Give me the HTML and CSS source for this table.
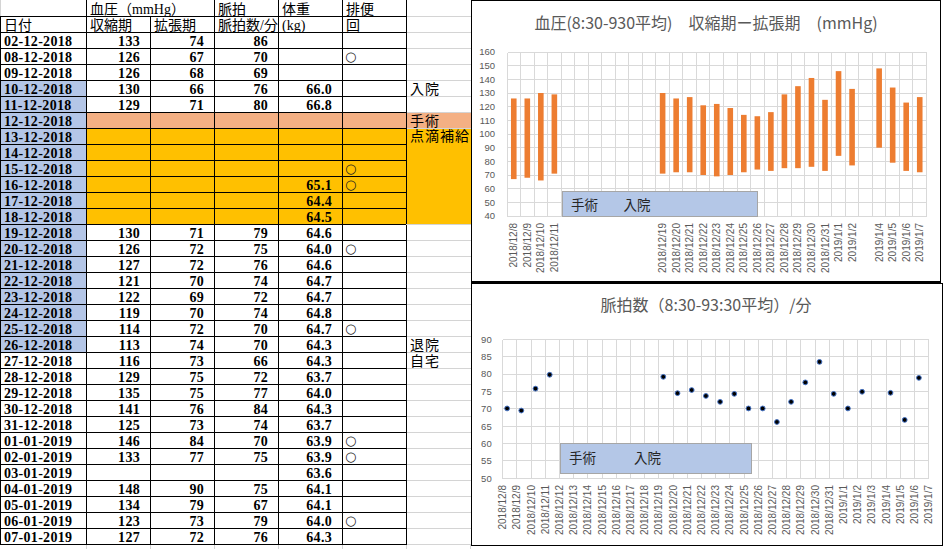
FILE: index.html
```html
<!DOCTYPE html>
<html lang="ja">
<head>
<meta charset="utf-8">
<title>血圧・脈拍・体重 記録</title>
<link rel="stylesheet" href="styles.css">
</head>
<body>
<div class="sheet">
  <table class="log">
    <colgroup>
      <col class="col-date"><col class="col-val"><col class="col-val"><col class="col-val"><col class="col-val"><col class="col-val"><col class="col-note">
    </colgroup>
    <thead>
      <tr><td class="h corner"></td><td class="h" colspan="2">血圧（mmHg）</td><td class="h">脈拍</td><td class="h">体重</td><td class="h">排便</td><td class="note"></td></tr>
      <tr><td class="h">日付</td><td class="h">収縮期</td><td class="h">拡張期</td><td class="h">脈拍数/分</td><td class="h">(kg)</td><td class="h">回</td><td class="note"></td></tr>
    </thead>
    <tbody>
      <tr><td class="d">02-12-2018</td><td class="n">133</td><td class="n">74</td><td class="n">86</td><td class="n"></td><td class="m"></td><td class="note"></td></tr>
      <tr><td class="d">08-12-2018</td><td class="n">126</td><td class="n">67</td><td class="n">70</td><td class="n"></td><td class="m">○</td><td class="note"></td></tr>
      <tr><td class="d">09-12-2018</td><td class="n">126</td><td class="n">68</td><td class="n">69</td><td class="n"></td><td class="m"></td><td class="note"></td></tr>
      <tr><td class="d stay">10-12-2018</td><td class="n">130</td><td class="n">66</td><td class="n">76</td><td class="n">66.0</td><td class="m"></td><td class="note">入院</td></tr>
      <tr><td class="d stay">11-12-2018</td><td class="n">129</td><td class="n">71</td><td class="n">80</td><td class="n">66.8</td><td class="m"></td><td class="note"></td></tr>
      <tr><td class="d stay">12-12-2018</td><td class="n op"></td><td class="n op"></td><td class="n op"></td><td class="n op"></td><td class="m op"></td><td class="note op">手術</td></tr>
      <tr><td class="d stay">13-12-2018</td><td class="n drip"></td><td class="n drip"></td><td class="n drip"></td><td class="n drip"></td><td class="m drip"></td><td class="note drip" rowspan="6">点滴補給</td></tr>
      <tr><td class="d stay">14-12-2018</td><td class="n drip"></td><td class="n drip"></td><td class="n drip"></td><td class="n drip"></td><td class="m drip"></td></tr>
      <tr><td class="d stay">15-12-2018</td><td class="n drip"></td><td class="n drip"></td><td class="n drip"></td><td class="n drip"></td><td class="m drip">○</td></tr>
      <tr><td class="d stay">16-12-2018</td><td class="n drip"></td><td class="n drip"></td><td class="n drip"></td><td class="n drip">65.1</td><td class="m drip">○</td></tr>
      <tr><td class="d stay">17-12-2018</td><td class="n drip"></td><td class="n drip"></td><td class="n drip"></td><td class="n drip">64.4</td><td class="m drip"></td></tr>
      <tr><td class="d stay">18-12-2018</td><td class="n drip"></td><td class="n drip"></td><td class="n drip"></td><td class="n drip">64.5</td><td class="m drip"></td></tr>
      <tr><td class="d stay">19-12-2018</td><td class="n">130</td><td class="n">71</td><td class="n">79</td><td class="n">64.6</td><td class="m"></td><td class="note"></td></tr>
      <tr><td class="d stay">20-12-2018</td><td class="n">126</td><td class="n">72</td><td class="n">75</td><td class="n">64.0</td><td class="m">○</td><td class="note"></td></tr>
      <tr><td class="d stay">21-12-2018</td><td class="n">127</td><td class="n">72</td><td class="n">76</td><td class="n">64.6</td><td class="m"></td><td class="note"></td></tr>
      <tr><td class="d stay">22-12-2018</td><td class="n">121</td><td class="n">70</td><td class="n">74</td><td class="n">64.7</td><td class="m"></td><td class="note"></td></tr>
      <tr><td class="d stay">23-12-2018</td><td class="n">122</td><td class="n">69</td><td class="n">72</td><td class="n">64.7</td><td class="m"></td><td class="note"></td></tr>
      <tr><td class="d stay">24-12-2018</td><td class="n">119</td><td class="n">70</td><td class="n">74</td><td class="n">64.8</td><td class="m"></td><td class="note"></td></tr>
      <tr><td class="d stay">25-12-2018</td><td class="n">114</td><td class="n">72</td><td class="n">70</td><td class="n">64.7</td><td class="m">○</td><td class="note"></td></tr>
      <tr><td class="d stay">26-12-2018</td><td class="n">113</td><td class="n">74</td><td class="n">70</td><td class="n">64.3</td><td class="m"></td><td class="note">退院</td></tr>
      <tr><td class="d">27-12-2018</td><td class="n">116</td><td class="n">73</td><td class="n">66</td><td class="n">64.3</td><td class="m"></td><td class="note">自宅</td></tr>
      <tr><td class="d">28-12-2018</td><td class="n">129</td><td class="n">75</td><td class="n">72</td><td class="n">63.7</td><td class="m"></td><td class="note"></td></tr>
      <tr><td class="d">29-12-2018</td><td class="n">135</td><td class="n">75</td><td class="n">77</td><td class="n">64.0</td><td class="m"></td><td class="note"></td></tr>
      <tr><td class="d">30-12-2018</td><td class="n">141</td><td class="n">76</td><td class="n">84</td><td class="n">64.3</td><td class="m"></td><td class="note"></td></tr>
      <tr><td class="d">31-12-2018</td><td class="n">125</td><td class="n">73</td><td class="n">74</td><td class="n">63.7</td><td class="m"></td><td class="note"></td></tr>
      <tr><td class="d">01-01-2019</td><td class="n">146</td><td class="n">84</td><td class="n">70</td><td class="n">63.9</td><td class="m">○</td><td class="note"></td></tr>
      <tr><td class="d">02-01-2019</td><td class="n">133</td><td class="n">77</td><td class="n">75</td><td class="n">63.9</td><td class="m">○</td><td class="note"></td></tr>
      <tr><td class="d">03-01-2019</td><td class="n"></td><td class="n"></td><td class="n"></td><td class="n">63.6</td><td class="m"></td><td class="note"></td></tr>
      <tr><td class="d">04-01-2019</td><td class="n">148</td><td class="n">90</td><td class="n">75</td><td class="n">64.1</td><td class="m"></td><td class="note"></td></tr>
      <tr><td class="d">05-01-2019</td><td class="n">134</td><td class="n">79</td><td class="n">67</td><td class="n">64.1</td><td class="m"></td><td class="note"></td></tr>
      <tr><td class="d">06-01-2019</td><td class="n">123</td><td class="n">73</td><td class="n">79</td><td class="n">64.0</td><td class="m">○</td><td class="note"></td></tr>
      <tr><td class="d">07-01-2019</td><td class="n">127</td><td class="n">72</td><td class="n">76</td><td class="n">64.3</td><td class="m"></td><td class="note"></td></tr>
      <tr class="blank"><td></td><td></td><td></td><td></td><td></td><td></td><td></td></tr>
    </tbody>
  </table>

  <div class="charts">
    <div class="chart chart-bp">
      <svg class="plot" viewBox="471 1 468 280" aria-label="血圧グラフ">
        <text class="ttl" x="705" y="29" text-anchor="middle">血圧(8:30-930平均)　収縮期ー拡張期　(mmHg)</text>
        <g id="bp-plot"></g>
        <rect class="note-box" x="561.5" y="191.5" width="195" height="25"></rect>
        <text class="note-text" x="570" y="210">手術</text>
        <text class="note-text" x="622.5" y="210">入院</text>
      </svg>
    </div>
    <div class="chart chart-pulse">
      <svg class="plot" viewBox="471 284 470 261" aria-label="脈拍数グラフ">
        <text class="ttl" x="705" y="311" text-anchor="middle">脈拍数（8:30-93:30平均）/分</text>
        <g id="pulse-plot"></g>
        <rect class="note-box" x="559.5" y="443.5" width="191" height="30"></rect>
        <text class="note-text" x="568" y="463">手術</text>
        <text class="note-text" x="633" y="463">入院</text>
      </svg>
    </div>
  </div>
</div>
<script src="script.js"></script>
</body>
</html>
```

FILE: styles.css
```css
html, body {
  margin: 0;
  padding: 0;
  background: #fff;
}

body {
  width: 943px;
  height: 549px;
  overflow: hidden;
}

.sheet {
  display: flex;
  align-items: flex-start;
}

/* ---------- spreadsheet table ---------- */
.log {
  border-collapse: collapse;
  table-layout: fixed;
  width: 470px;
  flex: none;
  font-family: "Liberation Serif", "Noto Sans CJK JP", serif;
  font-size: 14px;
  color: #000;
}

.col-date { width: 86px; }
.col-val { width: 64px; }
.col-note { width: 64px; }

.log tr { height: 16px; }

.log td {
  padding: 0 3px;
  line-height: 12px;
  vertical-align: bottom;
  white-space: nowrap;
  overflow: hidden;
  border: 1px solid #000;
}

.log .h {
  font-weight: normal;
}

.log .corner {
  border-left-color: #d4d4d4;
  border-top: none;
}

.log thead tr:first-child td {
  border-top: none;
}

.log .d {
  font-weight: bold;
  letter-spacing: 0.3px;
}

.log .n {
  font-weight: bold;
  text-align: right;
  padding-right: 10px;
  letter-spacing: 0.3px;
}

.log .m {
  font-family: "DejaVu Sans", "Noto Sans CJK JP", sans-serif;
  font-size: 13px;
  line-height: 15px;
  vertical-align: middle;
  color: #222;
  padding-left: 2px;
  overflow: visible;
}

.log .note {
  border-left-color: #000;
  border-right: none;
  border-top-color: #d4d4d4;
  border-bottom-color: #d4d4d4;
  letter-spacing: 1px;
}

.log .note.drip {
  vertical-align: top;
  line-height: 14px;
  padding-top: 1px;
}

.log .stay { background: #b4c6e7; }
.log .op { background: #f4b084; }
.log .drip { background: #ffc000; }

.log .blank td {
  border-color: #d4d4d4;
}
.log .blank td:first-child {
  border-left: none;
}

/* ---------- charts ---------- */
.charts {
  width: 473px;
  flex: none;
  display: flex;
  flex-direction: column;
  background: #fff;
}

.chart {
  box-sizing: border-box;
  border: 1px solid #000;
  background: #fff;
}

.chart-bp {
  width: 470px;
  height: 283px;
  border-bottom-width: 2px;
}

.chart-pulse {
  width: 472px;
  height: 263px;
}

.plot {
  display: block;
  width: 100%;
  height: 100%;
}

.ttl {
  font-family: "Noto Sans CJK JP", sans-serif;
  font-size: 16px;
  fill: #595959;
}

.tick {
  font-family: "Liberation Sans", sans-serif;
  font-size: 9.5px;
  fill: #595959;
}

.cat {
  font-family: "Liberation Sans", sans-serif;
  font-size: 10px;
  fill: #595959;
}

.grid line {
  stroke: #d9d9d9;
  stroke-width: 1;
  shape-rendering: crispEdges;
}

.bar {
  fill: #ed7d31;
}

.dot {
  fill: #000;
  stroke: #4472c4;
  stroke-width: 1;
}

.note-box {
  fill: #b4c7e7;
  stroke: #a6a6a6;
  stroke-width: 1;
}

.note-text {
  font-family: "Noto Sans CJK JP", sans-serif;
  font-size: 13.5px;
  fill: #262626;
}
```

FILE: script.js
```js
(function () {
  var NS = 'http://www.w3.org/2000/svg';

  function add(parent, tag, attrs, text) {
    var node = document.createElementNS(NS, tag);
    for (var key in attrs) node.setAttribute(key, attrs[key]);
    if (text !== undefined) node.textContent = text;
    parent.appendChild(node);
    return node;
  }

  function crisp(v) { return Math.round(v - 0.5) + 0.5; }

  function dateLabel(i) {
    return i < 24 ? '2018/12/' + (8 + i) : '2019/1/' + (i - 23);
  }

  function catLabel(svg, x, yTop, text) {
    var ax = (x + 3.5).toFixed(1);
    add(svg, 'text', {
      'class': 'cat', x: ax, y: yTop, 'text-anchor': 'end',
      transform: 'rotate(-90 ' + ax + ' ' + yTop + ')'
    }, text);
  }

  /* ---- blood pressure floating bars ---- */
  var bp = document.getElementById('bp-plot');
  var L = 506, R = 925.5, N = 31, step = (R - L) / N;
  var top = 52, bottom = 216;
  function yBp(v) { return top + (160 - v) * (bottom - top) / 120; }

  var grid = add(bp, 'g', { 'class': 'grid' });
  var v, k, i;
  for (v = 40; v <= 160; v += 10) {
    var gy = crisp(yBp(v));
    add(grid, 'line', { x1: crisp(L), x2: crisp(R), y1: gy, y2: gy });
    add(bp, 'text', { 'class': 'tick', x: 494, y: (yBp(v) + 3.4).toFixed(1), 'text-anchor': 'end' }, String(v));
  }
  for (k = 0; k <= N; k++) {
    var gx = crisp(L + k * step);
    add(grid, 'line', { x1: gx, x2: gx, y1: crisp(top), y2: crisp(bottom) });
  }
  var blank = { 4: 1, 5: 1, 6: 1, 7: 1, 8: 1, 9: 1, 10: 1, 26: 1 };
  for (i = 0; i < N; i++) {
    if (!blank[i]) catLabel(bp, L + (i + 0.5) * step, 223, dateLabel(i));
  }
  var bars = [
    [0, 126, 67], [1, 126, 68], [2, 130, 66], [3, 129, 71],
    [11, 130, 71], [12, 126, 72], [13, 127, 72], [14, 121, 70], [15, 122, 69],
    [16, 119, 70], [17, 114, 72], [18, 113, 74], [19, 116, 73], [20, 129, 75],
    [21, 135, 75], [22, 141, 76], [23, 125, 73], [24, 146, 84], [25, 133, 77],
    [27, 148, 90], [28, 134, 79], [29, 123, 73], [30, 127, 72]
  ];
  bars.forEach(function (b) {
    var cx = L + (b[0] + 0.5) * step;
    add(bp, 'rect', {
      'class': 'bar',
      x: (cx - 2.8).toFixed(2),
      y: yBp(b[1]).toFixed(2),
      width: 5.6,
      height: (yBp(b[2]) - yBp(b[1])).toFixed(2)
    });
  });

  /* ---- pulse scatter ---- */
  var pl = document.getElementById('pulse-plot');
  var L2 = 501.7, step2 = 14.2, N2 = 30, top2 = 339.3, bottom2 = 478.3;
  function yP(val) { return top2 + (90 - val) * (bottom2 - top2) / 40; }

  var grid2 = add(pl, 'g', { 'class': 'grid' });
  for (v = 50; v <= 90; v += 5) {
    var gy2 = crisp(yP(v));
    add(grid2, 'line', { x1: crisp(L2), x2: crisp(L2 + N2 * step2), y1: gy2, y2: gy2 });
    add(pl, 'text', { 'class': 'tick', x: 490.7, y: (yP(v) + 3.4).toFixed(1), 'text-anchor': 'end' }, String(v));
  }
  for (k = 0; k <= N2; k++) {
    var gx2 = crisp(L2 + k * step2);
    add(grid2, 'line', { x1: gx2, x2: gx2, y1: crisp(top2), y2: crisp(bottom2) });
    catLabel(pl, L2 + k * step2, 485, dateLabel(k));
  }
  var pts = [
    [0, 70.1], [1, 69.5], [2, 75.8], [3, 79.8],
    [11, 79.2], [12, 74.5], [13, 75.4], [14, 73.7], [15, 72.0], [16, 74.3],
    [17, 70.1], [18, 70.1], [19, 66.2], [20, 72.0], [21, 77.6], [22, 83.5],
    [23, 74.3], [24, 70.1], [25, 74.9], [27, 74.6], [28, 66.8], [29, 78.9]
  ];
  pts.forEach(function (p) {
    add(pl, 'circle', {
      'class': 'dot',
      cx: (L2 + p[0] * step2 + 4.4).toFixed(2),
      cy: yP(p[1]).toFixed(2),
      r: 2.4
    });
  });
})();
```
